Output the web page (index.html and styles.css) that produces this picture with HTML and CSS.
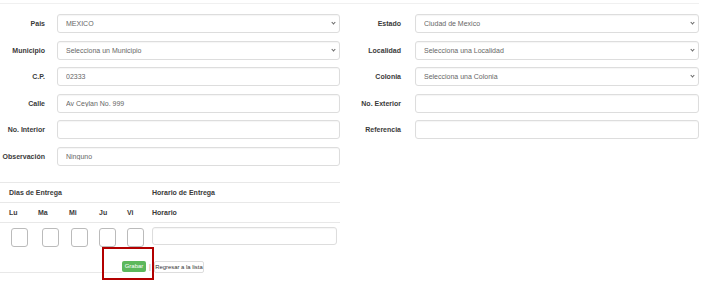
FILE: index.html
```html
<!DOCTYPE html>
<html lang="es">
<head>
  <meta charset="UTF-8" />
  <title>Dirección de Entrega</title>
  <link rel="stylesheet" href="styles.css">
</head>
<body>
  <div class="topline"></div>

  <div class="form">
    <label>Pais</label>
    <div class="select"><select><option>MEXICO</option></select></div>
    <label>Estado</label>
    <div class="select"><select><option>Ciudad de Mexico</option></select></div>

    <label>Municipio</label>
    <div class="select"><select><option>Selecciona un Municipio</option></select></div>
    <label>Localidad</label>
    <div class="select"><select><option>Selecciona una Localidad</option></select></div>

    <label>C.P.</label>
    <input type="text" value="02333">
    <label>Colonia</label>
    <div class="select"><select><option>Selecciona una Colonia</option></select></div>

    <label>Calle</label>
    <input type="text" value="Av Ceylan No. 999">
    <label>No. Exterior</label>
    <input type="text">

    <label>No. Interior</label>
    <input type="text">
    <label>Referencia</label>
    <input type="text">

    <label>Observación</label>
    <input type="text" value="Ninguno">
  </div>

  <table class="dias">
    <tr>
      <th colspan="5" class="first">Dias de Entrega</th>
      <th>Horario de Entrega</th>
    </tr>
    <tr>
      <th class="first c1">Lu</th>
      <th class="c2">Ma</th>
      <th class="c3">Mi</th>
      <th class="c4">Ju</th>
      <th class="c5">Vi</th>
      <th>Horario</th>
    </tr>
    <tr class="checks">
      <td class="first"><span class="check"></span></td>
      <td><span class="check"></span></td>
      <td><span class="check"></span></td>
      <td><span class="check"></span></td>
      <td><span class="check"></span></td>
      <td><input type="text" class="horario"></td>
    </tr>
  </table>

  <div class="actions">
    <div class="rule"></div>
    <button class="btn-grabar">Grabar</button>
    <span class="sep">|</span>
    <button class="btn-regresar">Regresar a la lista</button>
    <div class="marca"></div>
  </div>
</body>
</html>
```

FILE: styles.css
```css
body {
  margin: 0;
  font-family: 'Liberation Sans', Arial, sans-serif;
  font-size: 7px;
  color: #3a3a3a;
  background: #fff;
}
.topline {
  width: 699px;
  height: 3px;
  border-bottom: 1px solid #f0f0f0;
}
.form {
  display: grid;
  grid-template-columns: 57px 283px 75px 284px;
  grid-auto-rows: 19px;
  row-gap: 7.5px;
  margin-top: 10px;
}
.form label {
  font-weight: bold;
  text-align: right;
  align-self: center;
  padding-right: 12px;
  white-space: nowrap;
}
.form label:nth-child(4n+3) {
  padding-right: 14px;
}
input, select {
  box-sizing: border-box;
  width: 100%;
  height: 19px;
  border: 1px solid #ddd;
  border-radius: 3px;
  padding: 0 8px;
  font-family: inherit;
  font-size: 7px;
  color: #666;
  background: #fff;
  box-shadow: inset 0 1px 1px rgba(0, 0, 0, 0.04);
  outline: none;
  margin: 0;
}
select {
  appearance: none;
  -webkit-appearance: none;
}
.select {
  position: relative;
}
.select::after {
  content: "";
  position: absolute;
  right: 5px;
  top: 7px;
  width: 2px;
  height: 2px;
  border-right: 1px solid #666;
  border-bottom: 1px solid #666;
  transform: rotate(45deg);
}
.dias {
  width: 340px;
  border-collapse: collapse;
  margin-top: 16px;
}
.dias th, .dias td {
  text-align: left;
  padding: 0 0 0 4px;
  border-top: 1px solid #e8e8e8;
  height: 19px;
  font-weight: bold;
  white-space: nowrap;
}
.dias .first {
  padding-left: 9px;
}
.dias .c1 { width: 25px; }
.dias .c2 { width: 27px; }
.dias .c3 { width: 26px; }
.dias .c4 { width: 24px; }
.dias .c5 { width: 21px; }
.dias .checks td {
  height: 28px;
  vertical-align: top;
  padding-top: 5px;
}
.dias .checks td.first {
  padding-left: 11px;
}
.dias .checks td:nth-child(2) { padding-left: 8px; }
.dias .checks td:nth-child(3) { padding-left: 6px; }
.dias .checks td:nth-child(4) { padding-left: 4px; }
.dias .checks td:nth-child(5) { padding-left: 4px; }
.check {
  display: block;
  box-sizing: border-box;
  width: 17px;
  height: 19px;
  border: 1px solid #bbb;
  border-radius: 3px;
  background: #fff;
}
.horario {
  width: 185px;
  height: 18px;
  margin-top: -1px;
  padding: 0 6px;
}
.actions {
  position: relative;
  display: flex;
  align-items: flex-start;
  margin-top: 5px;
  height: 20px;
}
.rule {
  width: 122px;
  height: 11px;
  border-bottom: 1px solid #e8e8e8;
}
.btn-grabar {
  width: 24px;
  height: 11px;
  padding: 0;
  border: none;
  border-radius: 2px;
  background: #5cb85c;
  color: #fff;
  font-family: inherit;
  font-size: 6px;
}
.sep {
  width: 8px;
  text-align: center;
  color: #999;
  font-size: 7px;
  line-height: 11px;
}
.btn-regresar {
  width: 50px;
  height: 12px;
  padding: 0;
  border: 1px solid #ddd;
  border-radius: 2px;
  background: #fff;
  color: #333;
  font-family: inherit;
  font-size: 5.9px;
  white-space: nowrap;
}
.marca {
  position: absolute;
  left: 102px;
  top: -14px;
  width: 52px;
  height: 33px;
  box-sizing: border-box;
  border: 2px solid #b30000;
}
```
